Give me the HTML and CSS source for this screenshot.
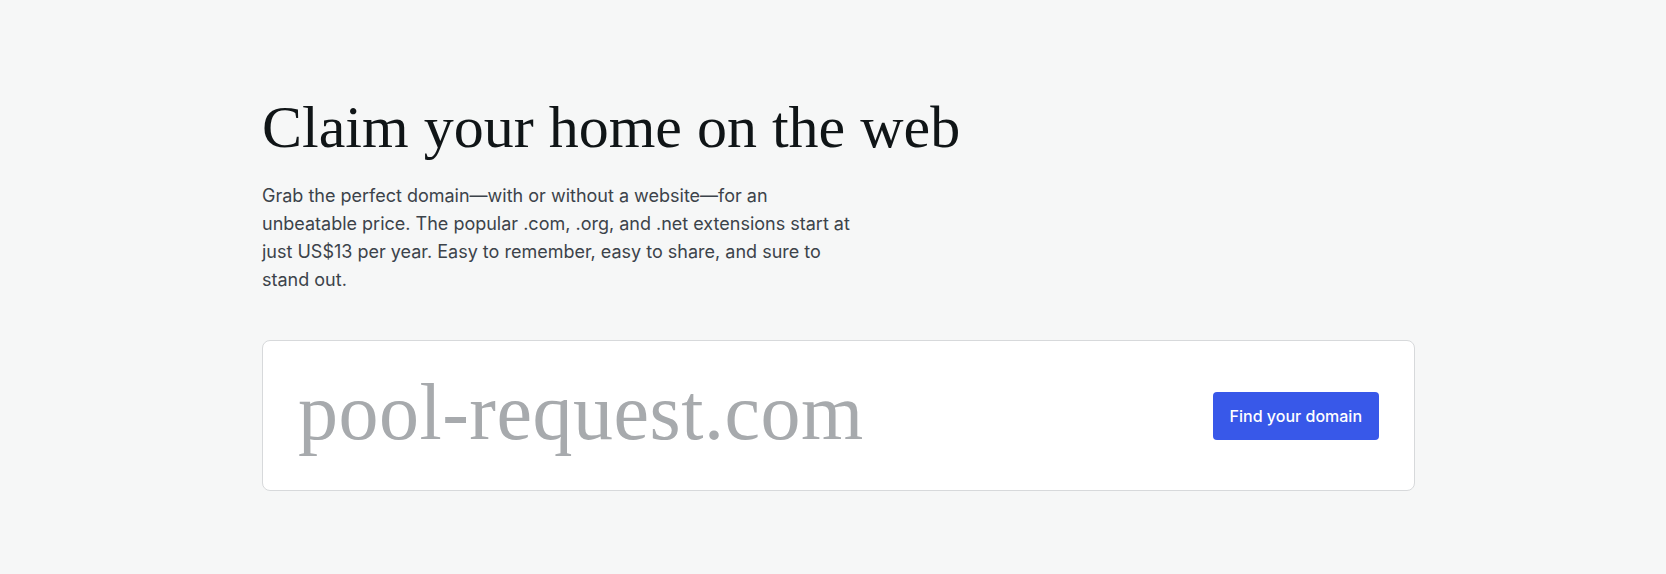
FILE: index.html
```html
<!DOCTYPE html>
<html lang="en">
<head>
    <meta charset="UTF-8">
    <meta name="viewport" content="width=device-width, initial-scale=1.0">
    <title>Domains</title>
    <link rel="stylesheet" href="styles.css">
</head>
<body>
    <section class="hero">
        <h1 class="hero-title">Claim your home on the web</h1>
        <p class="hero-text">Grab the perfect domain—with or without a website—for an unbeatable price. The popular .com, .org, and .net extensions start at just US$13 per year. Easy to remember, easy to share, and sure to stand out.</p>
        <form class="search-card">
            <span class="search-domain">pool-request.com</span>
            <button type="button" class="search-button">Find your domain</button>
        </form>
    </section>
</body>
</html>
```

FILE: styles.css
```css
body {
    margin: 0;
    background-color: #f6f7f7;
    font-family: Inter, "Noto Sans", sans-serif;
    color: #101517;
}
.hero {
    width: 1153px;
    margin-left: 262px;
    padding-top: 91px;
}
.hero-title {
    margin: 0;
    font-family: "Liberation Serif", serif;
    font-weight: 400;
    font-size: 60px;
    line-height: 72px;
    color: #101517;
}
.hero-text {
    margin: 19px 0 0;
    max-width: 595px;
    font-size: 18px;
    line-height: 28px;
    color: #3c434a;
}
.search-card {
    display: flex;
    align-items: center;
    justify-content: space-between;
    box-sizing: border-box;
    height: 151px;
    margin-top: 46px;
    padding: 0 35px;
    background-color: #fff;
    border: 1px solid #d7d9db;
    border-radius: 8px;
}
.search-domain {
    margin-bottom: 8px;
    font-family: "Liberation Serif", serif;
    font-size: 80px;
    line-height: 80px;
    letter-spacing: 0.5px;
    color: #a7aaad;
}
.search-button {
    height: 48px;
    padding: 0 17px;
    border: none;
    border-radius: 4px;
    background-color: #3858e9;
    color: #fff;
    font-family: Inter, "Noto Sans", sans-serif;
    font-size: 16px;
    font-weight: 500;
    cursor: pointer;
}
```
